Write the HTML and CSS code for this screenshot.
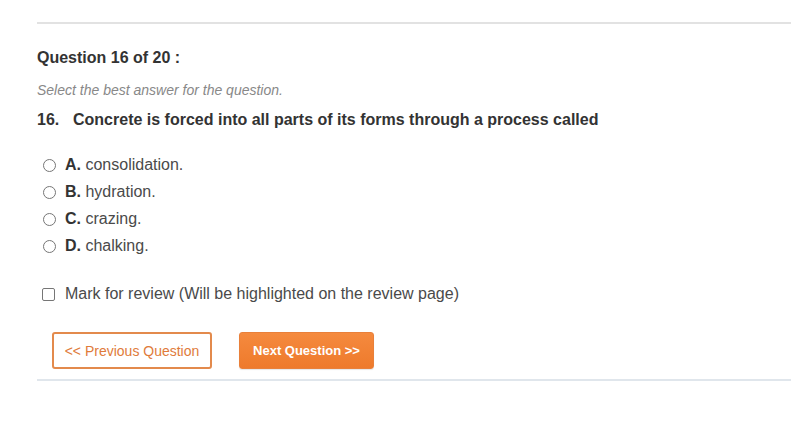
FILE: index.html
```html
<!DOCTYPE html>
<html>
<head>
<meta charset="utf-8">
<link rel="stylesheet" href="styles.css">
</head>
<body>
<div class="page">
  <hr class="rule-top">
  <h2 class="q-head">Question 16 of 20 :</h2>
  <p class="hint">Select the best answer for the question.</p>
  <p class="q-text"><span class="q-num">16.</span>Concrete is forced into all parts of its forms through a process called</p>
  <ul class="options">
    <li><label class="opt"><span class="radio"></span><b>A.</b>&nbsp;consolidation.</label></li>
    <li><label class="opt"><span class="radio"></span><b>B.</b>&nbsp;hydration.</label></li>
    <li><label class="opt"><span class="radio"></span><b>C.</b>&nbsp;crazing.</label></li>
    <li><label class="opt"><span class="radio"></span><b>D.</b>&nbsp;chalking.</label></li>
  </ul>
  <label class="review"><span class="check"></span>Mark for review (Will be highlighted on the review page)</label>
  <div class="nav">
    <button class="btn btn-prev">&lt;&lt; Previous Question</button>
    <button class="btn btn-next">Next Question &gt;&gt;</button>
  </div>
  <hr class="rule-bottom">
</div>
</body>
</html>
```
FILE: styles.css
```css
html, body {
  margin: 0;
  padding: 0;
  background: #fff;
}
body {
  font-family: "Liberation Sans", Arial, sans-serif;
  color: #333;
}
.page {
  padding: 22px 0 0 37px;
}
.rule-top {
  margin: 0;
  border: 0;
  height: 2px;
  background: #e2e2e2;
}
.q-head {
  margin: 25px 0 0;
  font-size: 16px;
  font-weight: bold;
  line-height: 18px;
  color: #333;
}
.hint {
  margin: 15px 0 0;
  font-size: 14px;
  font-style: italic;
  color: #888;
  line-height: 16px;
}
.q-text {
  margin: 13px 0 0;
  font-size: 16px;
  font-weight: bold;
  line-height: 18px;
  color: #333;
}
.q-num {
  display: inline-block;
  width: 36px;
}
.options {
  list-style: none;
  margin: 27px 0 0;
  padding: 0;
}
.options li {
  height: 27px;
}
.opt {
  display: flex;
  align-items: center;
  font-size: 16px;
  line-height: 18px;
  color: #4a4a4a;
}
.opt b {
  color: #333;
}
.radio {
  width: 11px;
  height: 11px;
  border: 1px solid #767676;
  border-radius: 50%;
  margin: 0 9px 0 6px;
  flex: none;
}
.review {
  display: flex;
  align-items: center;
  margin-top: 21px;
  font-size: 16px;
  line-height: 18px;
  color: #4a4a4a;
}
.check {
  width: 11px;
  height: 11px;
  border: 1px solid #767676;
  border-radius: 2px;
  margin: 0 10px 0 5px;
  flex: none;
}
.nav {
  display: flex;
  gap: 27px;
  margin: 29px 0 0 15px;
}
.btn {
  height: 37px;
  font-family: "Liberation Sans", Arial, sans-serif;
  font-size: 14px;
  border-radius: 3px;
  padding: 0;
  cursor: pointer;
}
.btn-prev {
  width: 160px;
  background: #fff;
  border: 2px solid #e38a4c;
  color: #e07b3a;
}
.btn-next {
  width: 135px;
  background: linear-gradient(#f58a3e, #ee7a2c);
  border: 1px solid #e9803a;
  color: #fff;
  font-size: 13px;
  font-weight: bold;
  box-shadow: 0 1px 1px rgba(0,0,0,0.1);
}
.rule-bottom {
  margin: 10px 0 0;
  border: 0;
  height: 2px;
  background: #e0e6ec;
}
```
